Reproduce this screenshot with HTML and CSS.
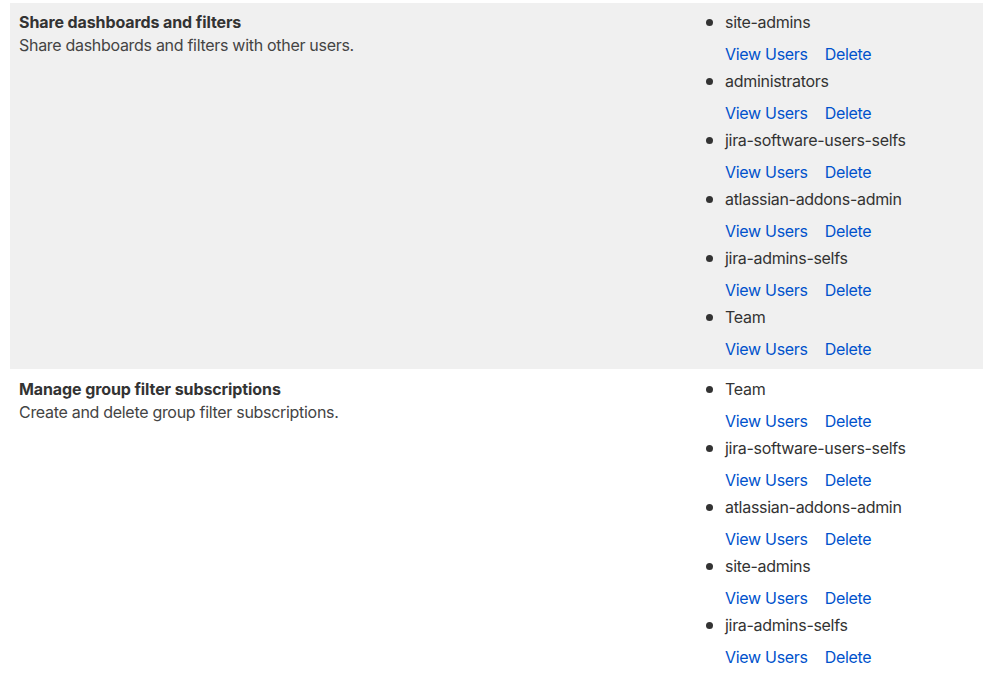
FILE: index.html
```html
<!DOCTYPE html>
<html lang="en">
<head>
  <meta charset="UTF-8" />
  <meta name="viewport" content="width=device-width, initial-scale=1.0"/>
  <title>Global permissions</title>
  <link rel="stylesheet" href="styles.css">
</head>
<body>
  <div class="perm-table">
    <div class="perm-row shaded">
      <div class="perm-info">
        <h3>Share dashboards and filters</h3>
        <p>Share dashboards and filters with other users.</p>
      </div>
      <ul class="group-list">
        <li><div class="group-name">site-admins</div><div class="actions"><a href="#">View Users</a><a href="#">Delete</a></div></li>
        <li><div class="group-name">administrators</div><div class="actions"><a href="#">View Users</a><a href="#">Delete</a></div></li>
        <li><div class="group-name">jira-software-users-selfs</div><div class="actions"><a href="#">View Users</a><a href="#">Delete</a></div></li>
        <li><div class="group-name">atlassian-addons-admin</div><div class="actions"><a href="#">View Users</a><a href="#">Delete</a></div></li>
        <li><div class="group-name">jira-admins-selfs</div><div class="actions"><a href="#">View Users</a><a href="#">Delete</a></div></li>
        <li><div class="group-name">Team</div><div class="actions"><a href="#">View Users</a><a href="#">Delete</a></div></li>
      </ul>
    </div>
    <div class="perm-row">
      <div class="perm-info">
        <h3>Manage group filter subscriptions</h3>
        <p>Create and delete group filter subscriptions.</p>
      </div>
      <ul class="group-list">
        <li><div class="group-name">Team</div><div class="actions"><a href="#">View Users</a><a href="#">Delete</a></div></li>
        <li><div class="group-name">jira-software-users-selfs</div><div class="actions"><a href="#">View Users</a><a href="#">Delete</a></div></li>
        <li><div class="group-name">atlassian-addons-admin</div><div class="actions"><a href="#">View Users</a><a href="#">Delete</a></div></li>
        <li><div class="group-name">site-admins</div><div class="actions"><a href="#">View Users</a><a href="#">Delete</a></div></li>
        <li><div class="group-name">jira-admins-selfs</div><div class="actions"><a href="#">View Users</a><a href="#">Delete</a></div></li>
      </ul>
    </div>
  </div>
</body>
</html>
```

FILE: styles.css
```css
body {
  font-family: Inter, "Liberation Sans", Arial, sans-serif;
  font-size: 16px;
  letter-spacing: -0.3px;
  color: #333;
  background: #fff;
  margin: 3px 16px 0 10px;
}
.perm-row {
  display: grid;
  grid-template-columns: 687px 1fr;
  padding: 10px 9px 10px;
}
.perm-row.shaded {
  background: #f0f0f0;
  padding-top: 9px;
  padding-bottom: 10px;
}
.perm-info h3 {
  margin: 0 0 3px;
  font-size: 16px;
  line-height: 20px;
  font-weight: 700;
  letter-spacing: -0.1px;
}
.perm-info p {
  margin: 0;
  line-height: 20px;
  color: #444;
}
.group-list {
  list-style: none;
  margin: 0;
  padding: 0;
}
.group-list li {
  margin-bottom: 7px;
}
.group-list li:last-child {
  margin-bottom: 0;
}
.group-name {
  line-height: 20px;
}
.group-name::before {
  content: "";
  display: inline-block;
  width: 7px;
  height: 7px;
  border-radius: 50%;
  background: #333;
  margin-right: 12px;
  vertical-align: 2px;
}
.actions {
  margin-top: 12px;
  padding-left: 19px;
  line-height: 20px;
}
.actions a {
  color: #0052cc;
  text-decoration: none;
  margin-right: 17px;
}
```
